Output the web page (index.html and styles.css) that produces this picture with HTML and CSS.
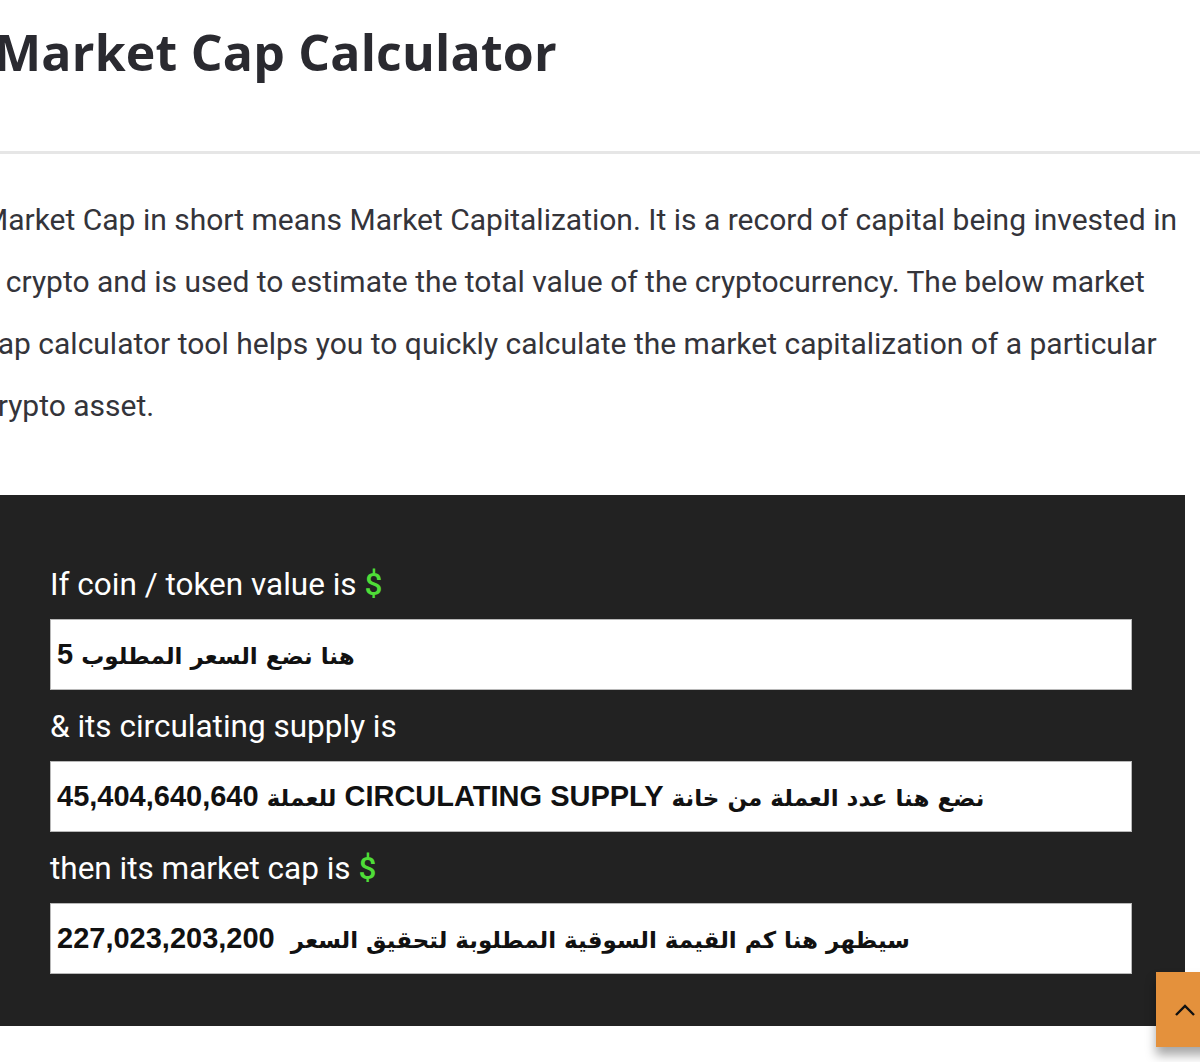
FILE: index.html
```html
<!DOCTYPE html>
<html lang="en">
<head>
<meta charset="utf-8">
<title>Market Cap Calculator</title>
<link rel="stylesheet" href="styles.css">
</head>
<body>
<div class="page">
  <header class="head">
    <h1 class="title">Market Cap Calculator</h1>
  </header>
  <hr class="rule">
  <p class="intro">Market Cap in short means Market Capitalization. It is a record of capital being invested in a crypto and is used to estimate the total value of the cryptocurrency. The below market cap calculator tool helps you to quickly calculate the market capitalization of a particular crypto asset.</p>
  <section class="calc">
    <div class="label">If coin / token value is <span class="dollar">$</span></div>
    <div class="field"><span class="val" dir="rtl"><span class="ar">هنا نضع السعر المطلوب</span> <span class="num">5</span></span></div>
    <div class="label">&amp; its circulating supply is</div>
    <div class="field"><span class="val" dir="rtl"><span class="ar">نضع هنا عدد العملة من خانة</span> CIRCULATING SUPPLY <span class="ar">للعملة</span> <span class="num">45,404,640,640</span></span></div>
    <div class="label">then its market cap is <span class="dollar">$</span></div>
    <div class="field"><span class="val" dir="rtl"><span class="ar">سيظهر هنا كم القيمة السوقية المطلوبة لتحقيق السعر</span>  <span class="num">227,023,203,200</span></span></div>
  </section>
</div>
<a class="to-top" href="#" aria-label="Back to top">
  <svg width="22" height="14" viewBox="0 0 22 14"><path d="M2 12 L11 3 L20 12" fill="none" stroke="#111" stroke-width="2.4"/></svg>
</a>
</body>
</html>
```
FILE: styles.css
```css
html, body {
  margin: 0;
  padding: 0;
  background: #fff;
  overflow: hidden;
}
body {
  width: 1200px;
  height: 1062px;
  position: relative;
  font-family: Roboto, "Liberation Sans", sans-serif;
}
.page {
  margin-left: -18px;
  width: 1203px;
}
.head {
  padding: 20px 0 0 12px;
  height: 128px;
  box-sizing: border-box;
}
.title {
  margin: 0;
  font-family: "Open Sans", "DejaVu Sans", sans-serif;
  font-weight: 700;
  font-size: 50px;
  line-height: 64px;
  color: #2a2a30;
  letter-spacing: 0.2px;
}
.rule {
  margin: 23px -20px 0 0;
  border: 0;
  height: 3px;
  background: #e6e6e6;
}
.intro {
  margin: 35px 0 0 0;
  font-size: 30px;
  line-height: 62px;
  color: #34343a;
}
.calc {
  margin-top: 58px;
  background: #222222;
  padding: 53px 53px 52px 68px;
  display: flex;
  flex-direction: column;
}
.label {
  height: 71px;
  line-height: 71px;
  font-size: 31.5px;
  color: #ffffff;
  padding-top: 1px;
  box-sizing: border-box;
}
.dollar {
  color: #4fdc38;
  font-weight: 500;
}
.field {
  height: 71px;
  background: #fff;
  border: 1px solid #b8b8b8;
  box-sizing: border-box;
  display: flex;
  align-items: center;
  padding: 0 6px;
  font-family: "Liberation Sans", "DejaVu Sans", sans-serif;
  font-weight: 700;
  font-size: 29px;
  color: #111;
}
.field .val {
  white-space: pre;
}
.field .ar {
  font-family: "DejaVu Sans", sans-serif;
  font-size: 23px;
}
.field .num {
  letter-spacing: 1px;
}
.to-top {
  position: absolute;
  left: 1156px;
  top: 972px;
  width: 60px;
  height: 75px;
  background: #e4913c;
  box-shadow: 0 8px 10px rgba(0,0,0,0.35);
  display: flex;
  align-items: center;
  padding-left: 18px;
  box-sizing: border-box;
}
```
